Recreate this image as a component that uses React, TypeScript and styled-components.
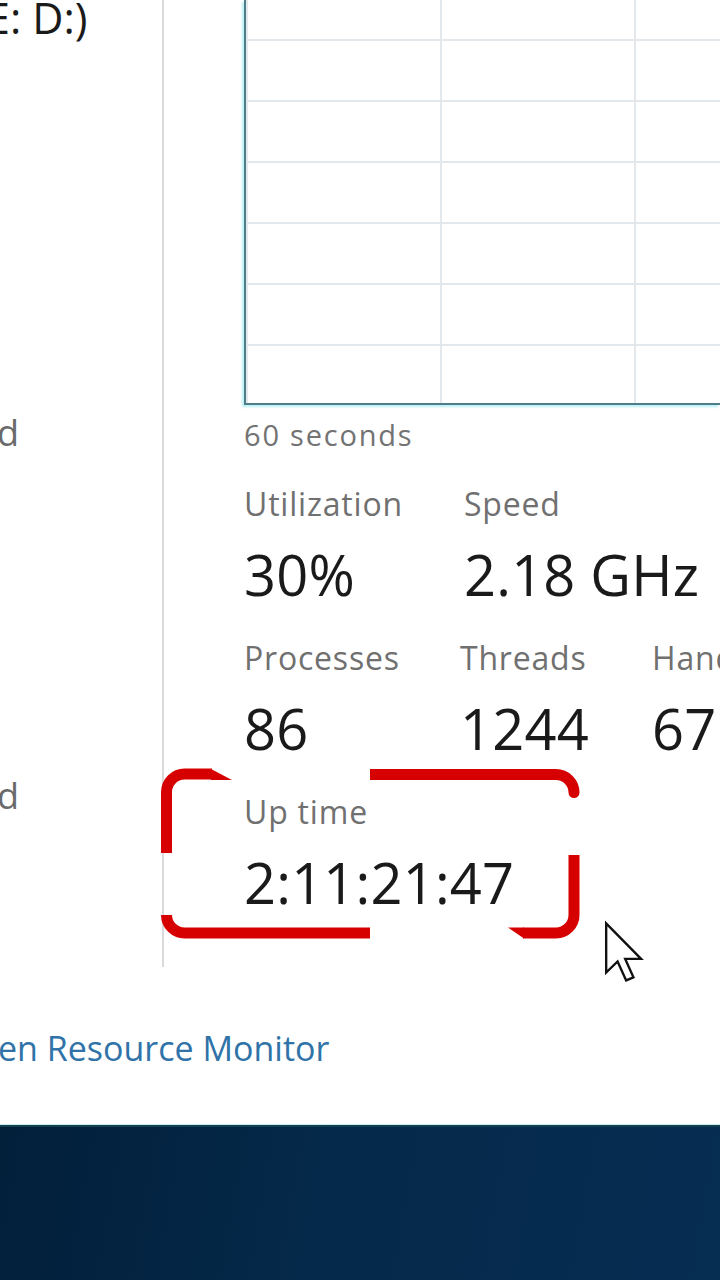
import React from "react";
import styled, { createGlobalStyle } from "styled-components";

const GlobalStyle = createGlobalStyle`
  html, body { margin: 0; padding: 0; background: #ffffff; }
  body { font-family: "Open Sans", "Noto Sans", sans-serif; overflow: hidden; }
  * { box-sizing: border-box; }
`;

const Page = styled.div`
  width: 720px;
  height: 1280px;
  display: flex;
  flex-direction: column;
  overflow: hidden;
`;

const Window = styled.div`
  position: relative;
  height: 1124px;
  background: #ffffff;
  display: flex;
  flex-direction: column;
`;

const Body = styled.div`
  display: flex;
  height: 967px;
`;

const Sidebar = styled.div`
  width: 164px;
  flex-shrink: 0;
  border-right: 2px solid #dadada;
  display: flex;
  flex-direction: column;
  overflow: hidden;
`;

const SideTitle = styled.div`
  font-size: 43px;
  line-height: 1;
  color: #1a1a1a;
  white-space: nowrap;
  margin: -4px 0 0 -14px;
`;

const SideItem = styled.div<{ $top: number }>`
  font-size: 36px;
  line-height: 1;
  color: #6a6a6a;
  margin: ${(p) => p.$top}px 0 0 -3px;
`;

const Content = styled.div`
  flex: 1;
  padding-left: 80px;
  display: flex;
  flex-direction: column;
  min-width: 0;
`;

const Graph = styled.div`
  height: 405px;
  border-left: 2px solid #4e7e89;
  border-bottom: 2px solid #4e7e89;
  box-shadow: -2px 2px 2px rgba(130, 225, 235, 0.55);
  background-color: #ffffff;
  background-image: linear-gradient(to right, #e2e8eb 2px, transparent 2px),
    linear-gradient(to bottom, #e2e8eb 2px, transparent 2px);
  background-size: 194px 61px;
  background-position: 194px 39px;
`;

const Caption = styled.div`
  margin-top: 15px;
  font-size: 29px;
  letter-spacing: 1.8px;
  line-height: 1;
  color: #737373;
`;

const Stats = styled.div`
  display: flex;
  flex-direction: column;
  gap: 41px;
  margin-top: 40px;
`;

const StatRow = styled.div`
  display: flex;
`;

const Stat = styled.div<{ $w?: number }>`
  width: ${(p) => (p.$w ? `${p.$w}px` : "auto")};
  flex-shrink: 0;
  display: flex;
  flex-direction: column;
  gap: 26px;
  white-space: nowrap;
`;

const Label = styled.div`
  font-size: 32px;
  letter-spacing: 0.8px;
  line-height: 1;
  color: #707070;
  margin-top: -1px;
`;

const Value = styled.div`
  font-size: 56px;
  letter-spacing: 0.2px;
  line-height: 1;
  color: #1a1a1a;
`;

const Footer = styled.div`
  flex: 1;
  padding-top: 64px;
`;

const Link = styled.div`
  font-size: 34px;
  line-height: 1;
  color: #2f73a8;
  margin-left: -2px;
  white-space: nowrap;
`;

const Band = styled.div`
  flex: 1;
  border-top: 1px solid #c4eef3;
  box-shadow: inset 0 2px 0 #143f4f;
  background: linear-gradient(100deg, #021f3a 0%, #05294a 45%, #062d52 100%);
`;

const Annotation = styled.svg`
  position: absolute;
  left: 150px;
  top: 760px;
  overflow: visible;
  pointer-events: none;
`;

const Cursor = styled.svg`
  position: absolute;
  left: 603px;
  top: 920px;
  pointer-events: none;
`;

export default function App() {
  return (
    <>
      <GlobalStyle />
      <Page>
        <Window>
          <Body>
            <Sidebar>
              <SideTitle>E: D:)</SideTitle>
              <SideItem $top={376}>d</SideItem>
              <SideItem $top={327}>d</SideItem>
            </Sidebar>
            <Content>
              <Graph />
              <Caption>60 seconds</Caption>
              <Stats>
                <StatRow>
                  <Stat $w={220}>
                    <Label>Utilization</Label>
                    <Value>30%</Value>
                  </Stat>
                  <Stat>
                    <Label>Speed</Label>
                    <Value>2.18 GHz</Value>
                  </Stat>
                </StatRow>
                <StatRow>
                  <Stat $w={216}>
                    <Label>Processes</Label>
                    <Value>86</Value>
                  </Stat>
                  <Stat $w={192}>
                    <Label>Threads</Label>
                    <Value>1244</Value>
                  </Stat>
                  <Stat>
                    <Label>Handles</Label>
                    <Value>67</Value>
                  </Stat>
                </StatRow>
                <StatRow>
                  <Stat>
                    <Label>Up time</Label>
                    <Value>2:11:21:47</Value>
                  </Stat>
                </StatRow>
              </Stats>
            </Content>
          </Body>
          <Footer>
            <Link>en Resource Monitor</Link>
          </Footer>
          <Annotation width="440" height="185" viewBox="0 0 440 185">
            <g fill="none" stroke="#d70000" strokeWidth="11" strokeLinecap="butt" strokeLinejoin="round">
              <path d="M16.5 93 V32 a18 18 0 0 1 18 -18 H62" />
              <path d="M220 14.5 H406 a18 18 0 0 1 18 18 V32" />
              <path d="M424 95 V155 a18 18 0 0 1 -18 18 H373" />
              <path d="M16.5 155 a18 18 0 0 0 18 18 H220" />
            </g>
            <g fill="#d70000">
              <polygon points="61,9 82,20 61,20" />
              <polygon points="358,167.5 374,167.5 374,178.5" />
            </g>
          </Annotation>
          <Cursor width="46" height="67" viewBox="0 0 14.5 21">
            <path
              d="M1 1 V16.5 L4.6 13 L7.3 19 L9.6 18 L7 12.2 H12 Z"
              fill="#ffffff"
              stroke="#111111"
              strokeWidth="0.75"
              strokeLinejoin="miter"
            />
          </Cursor>
        </Window>
        <Band />
      </Page>
    </>
  );
}
